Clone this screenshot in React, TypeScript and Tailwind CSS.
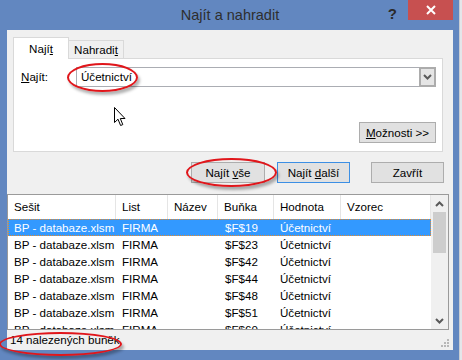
const rows = ["$F$19", "$F$23", "$F$42", "$F$44", "$F$48", "$F$51", "$F$60"];

const cols = [
  { label: "Sešit", w: "w-[108px]" },
  { label: "List", w: "w-[52px]" },
  { label: "Název", w: "w-[50px]" },
  { label: "Buňka", w: "w-[56px]" },
  { label: "Hodnota", w: "w-[67px]" },
  { label: "Vzorec", w: "flex-1" },
];

function Chevron({ up }: { up?: boolean }) {
  return (
    <svg width="9" height="6" viewBox="0 0 9 6">
      <polyline
        points={up ? "1,5 4.5,1.5 8,5" : "1,1 4.5,4.5 8,1"}
        fill="none"
        stroke="#5a5a5a"
        strokeWidth="2"
      />
    </svg>
  );
}

export default function App() {
  return (
    <div className="relative flex w-[462px] h-[360px] overflow-hidden font-['Liberation_Sans',Arial,sans-serif] text-[11.6px] text-black">
      <div className="flex flex-col w-[459px] h-full bg-[#6287c0] pl-[7px] pr-[6px] pb-[10px]">
        {/* title bar */}
        <div className="grid grid-cols-[1fr_auto_1fr] h-[30px] shrink-0">
          <div />
          <div className="pt-[5px] text-[14.5px] text-[#2e2e2e]">Najít a nahradit</div>
          <div className="flex justify-end items-start">
            <span className="mt-[3px] mr-[11px] text-[15px] font-bold text-[#2a2a2a]">?</span>
            <div className="flex items-center justify-center w-[45px] h-[20px] bg-[#c75050]">
              <svg width="10" height="10" viewBox="0 0 10 10">
                <path d="M1 1 L9 9 M9 1 L1 9" stroke="#fff" strokeWidth="2" />
              </svg>
            </div>
          </div>
        </div>

        {/* dialog body */}
        <div className="flex flex-col flex-1 bg-[#f0f0f0]">
          {/* tabs */}
          <div className="flex items-end h-[28px] pt-[7px] pl-[6px]">
            <div className="relative z-10 -mb-px flex items-center justify-center w-[56px] h-[22px] bg-white border border-b-0 border-[#d9d9d9]">
              Nají<span className="underline">t</span>
            </div>
            <div className="flex items-center justify-center w-[55px] h-[18px] border border-l-0 border-b-0 border-[#d9d9d9] bg-[#f0f0f0]">
              Nahradi<span className="underline">t</span>
            </div>
          </div>

          {/* tab panel */}
          <div className="flex flex-col justify-between ml-[6px] mr-[10px] h-[94px] bg-white border border-[#d9d9d9] pt-[8px] pb-[8px] pl-[7px] pr-[6px]">
            <div className="flex items-center">
              <span className="w-[55px]">
                <span className="underline">N</span>ajít:
              </span>
              <div className="flex flex-1 h-[20px] border border-[#abadb3] bg-white">
                <span className="flex-1 pl-[4px] leading-[18px]">Účetnictví</span>
                <div className="flex items-center justify-center w-[17px] h-[20px] -mt-px -mr-px bg-[#e5e5e5] border-2 border-[#acacac]">
                  <Chevron />
                </div>
              </div>
            </div>
            <div className="flex justify-end">
              <button className="w-[77px] h-[21px] bg-[#e1e1e1] border border-[#adadad]">
                <span className="underline">M</span>ožnosti &gt;&gt;
              </button>
            </div>
          </div>

          {/* buttons */}
          <div className="flex justify-end items-center mt-[10px] pr-[9px] h-[21px]">
            <button className="w-[74px] h-[21px] bg-[#e1e1e1] border border-[#adadad]">
              Najít <span className="underline">v</span>še
            </button>
            <button className="ml-[12px] w-[73px] h-[21px] bg-[#e1e1e1] border border-[#3c8fe4]">
              Najít <span className="underline">d</span>alší
            </button>
            <button className="ml-[21px] w-[73px] h-[21px] bg-[#e1e1e1] border border-[#adadad]">
              Zavřít
            </button>
          </div>

          {/* results list */}
          <div className="flex mt-[11px] mr-[4px] h-[136px] bg-white border border-[#9a9a9a]">
            <div className="flex-1 flex flex-col overflow-hidden">
              <div className="flex h-[24px] shrink-0">
                {cols.map((c) => (
                  <div
                    key={c.label}
                    className={`${c.w} shrink-0 flex items-center pl-[6px] border-r border-[#e5e5e5]`}
                  >
                    {c.label}
                  </div>
                ))}
              </div>
              {rows.map((cell, i) => (
                <div
                  key={cell}
                  className={
                    i === 0
                      ? "flex h-[17px] shrink-0 items-center bg-[#3399ff] text-white outline outline-1 outline-dotted outline-[#e58a2c] -outline-offset-1"
                      : "flex h-[17px] shrink-0 items-center"
                  }
                >
                  <span className="w-[108px] shrink-0 pl-[6px] whitespace-nowrap">BP - databaze.xlsm</span>
                  <span className="w-[52px] shrink-0 pl-[6px]">FIRMA</span>
                  <span className="w-[50px] shrink-0 pl-[6px]"></span>
                  <span className="w-[56px] shrink-0 pl-[7px]">{cell}</span>
                  <span className="w-[67px] shrink-0 pl-[6px]">Účetnictví</span>
                </div>
              ))}
            </div>
            <div className="flex flex-col w-[17px] bg-[#f0f0f0]">
              <div className="flex items-center justify-center h-[17px]">
                <Chevron up />
              </div>
              <div className="h-[41px] ml-[2px] mr-[2px] bg-[#cdcdcd]" />
              <div className="flex-1" />
              <div className="flex items-center justify-center h-[17px]">
                <Chevron />
              </div>
            </div>
          </div>

          {/* status bar */}
          <div className="flex items-center justify-between flex-1 pl-[3px] pr-[3px]">
            <span>14 nalezených buněk</span>
            <svg width="9" height="9" viewBox="0 0 9 9" className="self-end mb-[2px]">
              <g fill="#b8b8b8">
                <rect x="6" y="0" width="2" height="2" />
                <rect x="3" y="3" width="2" height="2" />
                <rect x="6" y="3" width="2" height="2" />
                <rect x="0" y="6" width="2" height="2" />
                <rect x="3" y="6" width="2" height="2" />
                <rect x="6" y="6" width="2" height="2" />
              </g>
            </svg>
          </div>
        </div>
      </div>
      <div className="w-[3px] h-full bg-[#e4e6ea] border-l border-[#c9cdd3]" />

      {/* red annotation ellipses */}
      <div className="absolute left-[67px] top-[63px] w-[71px] h-[29px] rounded-[50%] border-2 border-[#e0161b] shadow-[2px_3px_3px_rgba(0,0,0,0.3)]" />
      <div className="absolute left-[186px] top-[158px] w-[91px] h-[29px] rounded-[50%] border-2 border-[#e0161b] shadow-[2px_3px_3px_rgba(0,0,0,0.3)]" />
      <div className="absolute left-[-1px] top-[332px] w-[123px] h-[24px] rounded-[50%] border-2 border-[#e0161b] shadow-[2px_3px_3px_rgba(0,0,0,0.3)]" />

      {/* mouse pointer */}
      <svg
        className="absolute left-[114px] top-[107px]"
        width="13"
        height="20"
        viewBox="0 0 13 20"
      >
        <path
          d="M0.5 0.5 L0.5 15.5 L4 12.2 L6.6 18.5 L8.8 17.6 L6.3 11.5 L11 11.5 Z"
          fill="#fff"
          stroke="#000"
          strokeWidth="1"
        />
      </svg>
    </div>
  );
}
